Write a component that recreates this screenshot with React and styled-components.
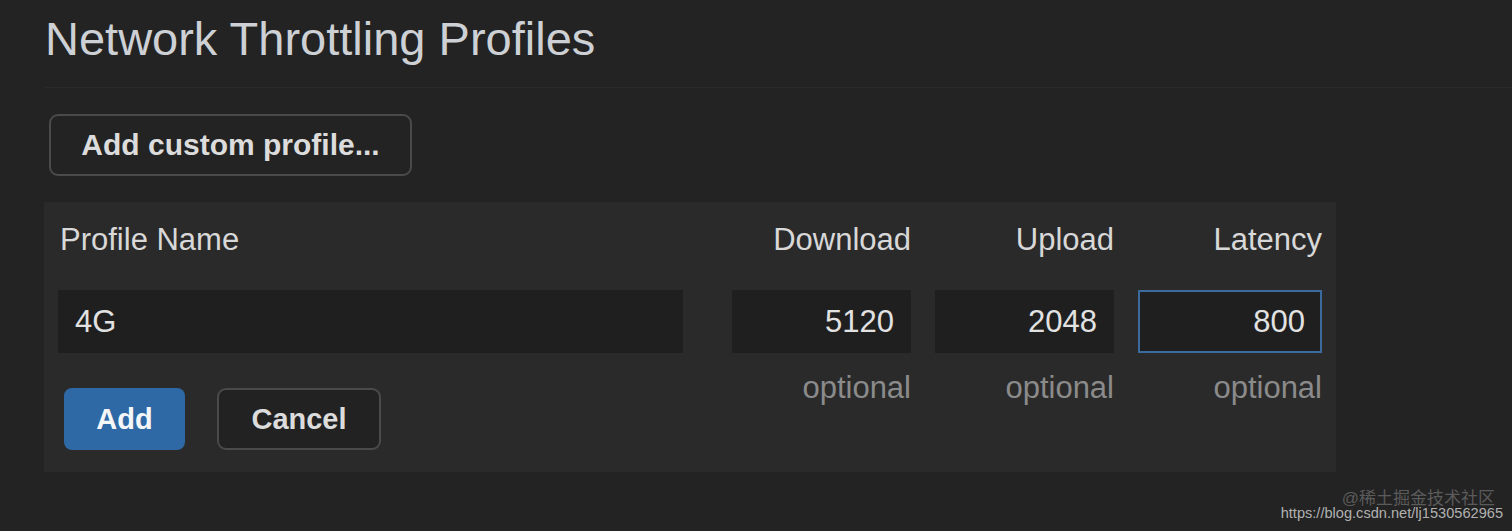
import React from 'react';
import styled, { createGlobalStyle } from 'styled-components';

const GlobalStyle = createGlobalStyle`
  html, body {
    margin: 0;
    padding: 0;
    background: #232323;
  }
  body {
    font-family: "Liberation Sans", Arial, Helvetica, sans-serif;
  }
`;

const Page = styled.div`
  position: relative;
  min-height: 531px;
  padding: 12px 0 0 44px;
  box-sizing: border-box;
`;

const Title = styled.h1`
  margin: 0 0 0 1px;
  font-size: 47px;
  line-height: 54px;
  font-weight: 400;
  color: #cdd0d4;
`;

const Divider = styled.div`
  margin: 21px 0 0 1px;
  height: 1px;
  background: #2b2b2b;
`;

const OutlineButton = styled.button`
  box-sizing: border-box;
  height: 62px;
  width: ${p => p.$width}px;
  padding: 0;
  border: 2px solid #4a4a4a;
  border-radius: 9px;
  background: ${p => p.$bg || 'transparent'};
  color: #dcdcdc;
  font-family: inherit;
  font-size: ${p => p.$size || 29}px;
  font-weight: 700;
  cursor: pointer;
`;

const AddCustom = styled(OutlineButton)`
  display: block;
  margin: 26px 0 0 5px;
`;

const Panel = styled.div`
  margin-top: 26px;
  width: 1292px;
  box-sizing: border-box;
  padding: 20px 14px 22px 14px;
  background: #2a2a2a;
  display: grid;
  grid-template-columns: 650px 179px 179px 184px;
  column-gap: 25px 0;
  column-gap: 0;
  justify-content: space-between;
  align-items: start;
`;

const Label = styled.div`
  font-size: 31px;
  line-height: 36px;
  color: #d8d8d8;
  text-align: ${p => (p.$right ? 'right' : 'left')};
  padding-left: ${p => (p.$right ? 0 : 2)}px;
`;

const Field = styled.input`
  box-sizing: border-box;
  width: ${p => p.$width || 179}px;
  height: 63px;
  margin-top: 32px;
  padding: 0 15px;
  border: ${p => (p.$focus ? '2px solid #3b6a9f' : '2px solid transparent')};
  background: #1f1f1f;
  color: #e2e2e2;
  font-family: inherit;
  font-size: 31px;
  text-align: ${p => (p.$num ? 'right' : 'left')};
  outline: none;
`;

const Hint = styled.div`
  margin-top: 17px;
  font-size: 31px;
  line-height: 36px;
  color: #8b8b8b;
  text-align: right;
`;

const Actions = styled.div`
  display: flex;
  gap: 32px;
  margin: 35px 0 0 6px;
`;

const PrimaryButton = styled.button`
  box-sizing: border-box;
  height: 62px;
  width: 121px;
  border: none;
  border-radius: 8px;
  background: #2e69a6;
  color: #f4f6f8;
  font-family: inherit;
  font-size: 29px;
  font-weight: 700;
  cursor: pointer;
`;

const Watermark = styled.div`
  position: absolute;
  right: 9px;
  bottom: 10px;
  text-align: right;
  font-family: "Liberation Sans", "Noto Sans CJK SC", sans-serif;
  line-height: 1;
`;

const WaterTop = styled.div`
  font-size: 17px;
  color: rgba(200, 200, 200, 0.35);
  margin-right: 8px;
  margin-bottom: -1px;
`;

const WaterUrl = styled.div`
  font-size: 14.6px;
  color: rgba(215, 215, 215, 0.8);
`;

const COLUMNS = [
  { label: 'Download', value: '5120' },
  { label: 'Upload', value: '2048' },
  { label: 'Latency', value: '800', focus: true, width: 184 },
];

export default function App() {
  return (
    <Page>
      <GlobalStyle />
      <Title>Network Throttling Profiles</Title>
      <Divider />
      <AddCustom $width={363} $size={30}>Add custom profile...</AddCustom>
      <Panel>
        <Label>Profile Name</Label>
        {COLUMNS.map(c => (
          <Label key={c.label} $right>{c.label}</Label>
        ))}
        <Field $width={625} defaultValue="4G" />
        {COLUMNS.map(c => (
          <Field key={c.label} $num $focus={c.focus} $width={c.width} defaultValue={c.value} />
        ))}
        <Actions>
          <PrimaryButton>Add</PrimaryButton>
          <OutlineButton $bg="#222" $width={164}>Cancel</OutlineButton>
        </Actions>
        {COLUMNS.map(c => (
          <Hint key={c.label}>optional</Hint>
        ))}
      </Panel>
      <Watermark>
        <WaterTop>@稀土掘金技术社区</WaterTop>
        <WaterUrl>https://blog.csdn.net/lj1530562965</WaterUrl>
      </Watermark>
    </Page>
  );
}
